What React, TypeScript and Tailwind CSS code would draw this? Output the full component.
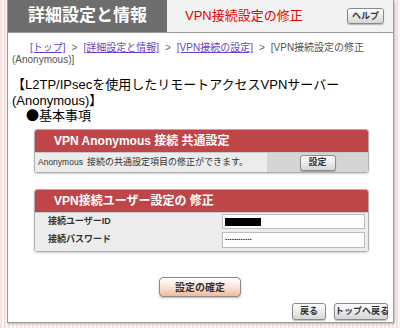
import React from 'react';

const jp = { fontFamily: '"Liberation Sans", "Noto Sans CJK JP", sans-serif' };

function GrayButton({ label, className = '' }: { label: string; className?: string }) {
    return (
        <button
            className={`h-[16px] rounded-[3px] border border-[#8a8a8a] bg-gradient-to-b from-white to-[#d6d6d6] px-0 whitespace-nowrap text-[9px] font-bold leading-none text-[#333] shadow-[0_1px_1px_rgba(0,0,0,0.25)] ${className}`}
        >
            {label}
        </button>
    );
}

function Sep() {
    return <span className="mx-[6px] text-[#666]">&gt;</span>;
}

export default function App() {
    return (
        <div
            className="w-[400px] h-[328px] overflow-hidden bg-[repeating-linear-gradient(90deg,#f6e2e2_0px,#f6e2e2_2px,#fdf4f4_2px,#fdf4f4_4px)]"
            style={jp}
        >
            <div className="ml-[7px] w-[387px] h-[323px] border border-[#9a9a9a] border-t-0 bg-white shadow-[1px_1px_2px_rgba(0,0,0,0.25)] flex flex-col">
                {/* header */}
                <div className="h-[33px] shrink-0 flex border-b border-[#9a9a9a]">
                    <div className="w-[159px] bg-[#6e6e6e] text-white text-[17px] font-bold flex items-center justify-center">
                        詳細設定と情報
                    </div>
                    <div className="flex-1 bg-[#f2f2f2] flex items-center pl-[18px] pr-[9px]">
                        <span className="text-[13px] text-[#e60000]">VPN接続設定の修正</span>
                        <GrayButton label="ヘルプ" className="ml-auto w-[37px] h-[14px] text-[8px]" />
                    </div>
                </div>

                {/* breadcrumb */}
                <div className="mt-[9px] pl-[4px] text-[10px] text-[#555]">
                    <div className="h-[12px] leading-[12px] pl-[18px] whitespace-nowrap">
                        <a className="text-[#6a3fc9] underline">[トップ]</a>
                        <Sep />
                        <a className="text-[#6a3fc9] underline">[詳細設定と情報]</a>
                        <Sep />
                        <a className="text-[#6a3fc9] underline">[VPN接続の設定]</a>
                        <Sep />
                        <span>[VPN接続設定の修正</span>
                    </div>
                    <div className="h-[12px] leading-[12px]">(Anonymous)]</div>
                </div>

                {/* title */}
                <div className="mt-[11px] pl-[4px] text-[13px] text-black">
                    <div className="h-[16px] leading-[16px] whitespace-nowrap">【L2TP/IPsecを使用したリモートアクセスVPNサーバー</div>
                    <div className="h-[15px] leading-[15px]">(Anonymous)】</div>
                    <div className="h-[14px] leading-[14px] pl-[14px]">
                        <span className="font-['Noto_Sans_CJK_JP']">●</span>基本事項
                    </div>
                </div>

                {/* section 1 */}
                <div className="mt-[7px] ml-[26px] w-[335px] rounded-[3px] border border-[#b0b0b0] shadow-[0_1px_2px_rgba(0,0,0,0.2)] overflow-hidden">
                    <div className="h-[22px] bg-[#bf4648] text-white text-[12px] font-bold flex items-center pl-[19px]">
                        VPN Anonymous 接続 共通設定
                    </div>
                    <div className="h-[20px] flex border-t border-[#c9c9c9]">
                        <div className="flex-1 bg-[#ececec] text-[9px] text-[#333] flex items-center pl-[3px] whitespace-nowrap">
                            <span className="text-[8.5px] mr-[4px]">Anonymous</span>接続の共通設定項目の修正ができます。
                        </div>
                        <div className="w-[101px] bg-[#d5d5d5] flex items-center justify-center">
                            <GrayButton label="設定" className="w-[36px] h-[15px] text-[8px]" />
                        </div>
                    </div>
                </div>

                {/* section 2 */}
                <div className="mt-[16px] ml-[26px] w-[335px] rounded-[3px] border border-[#b0b0b0] shadow-[0_1px_2px_rgba(0,0,0,0.2)] overflow-hidden">
                    <div className="h-[22px] bg-[#bf4648] text-white text-[12px] font-bold flex items-center pl-[19px]">
                        VPN接続ユーザー設定の 修正
                    </div>
                    <div className="bg-[#ececec] border-t border-[#c9c9c9] pb-[2px]">
                        <div className="h-[17px] flex items-center">
                            <span className="w-[187px] pl-[13px] text-[9px] font-bold text-[#333]">接続ユーザーID</span>
                            <div className="w-[143px] h-[15px] border border-[#bdbdbd] bg-white flex items-center pl-[2px]">
                                <div className="w-[36px] h-[8px] bg-black" />
                            </div>
                        </div>
                        <div className="h-[19px] flex items-center">
                            <span className="w-[187px] pl-[13px] text-[9px] font-bold text-[#333]">接続パスワード</span>
                            <div className="w-[143px] h-[16px] border border-[#bdbdbd] bg-white flex items-center pl-[2px] pb-[3px] text-[8px] font-bold leading-none text-black">
                                ............
                            </div>
                        </div>
                    </div>
                </div>

                {/* confirm */}
                <div className="mt-[25px] flex justify-center pr-[1px]">
                    <button className="w-[82px] h-[20px] rounded-[4px] border border-[#8a8a8a] bg-gradient-to-b from-white via-[#fbe3d6] to-[#f2b99b] text-[10px] font-bold text-[#333] shadow-[0_1px_2px_rgba(0,0,0,0.3)]">
                        設定の確定
                    </button>
                </div>

                {/* bottom buttons */}
                <div className="mt-[6px] flex justify-end gap-[8px] pr-[5px]">
                    <GrayButton label="戻る" className="w-[34px] h-[17px] text-[8px]" />
                    <GrayButton label="トップへ戻る" className="w-[54px] h-[17px] text-[8px]" />
                </div>
            </div>
        </div>
    );
}
